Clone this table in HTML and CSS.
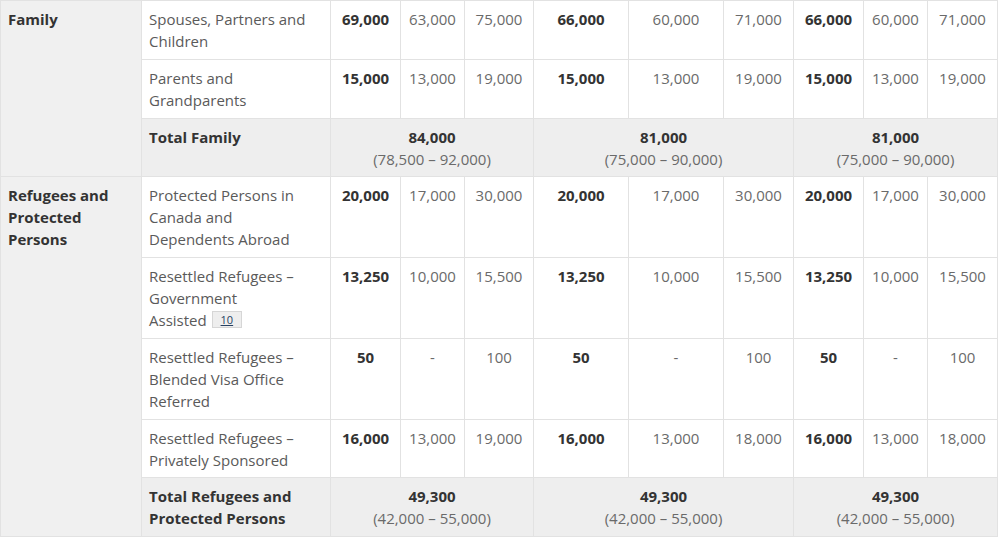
FILE: index.html
```html
<!DOCTYPE html>
<html lang="en">
<head>
<meta charset="utf-8">
<title>Immigration levels</title>
<link rel="stylesheet" href="styles.css">
</head>
<body>
<table class="levels">
  <colgroup>
    <col class="c-cat"><col class="c-sub">
    <col class="c-n1"><col class="c-n2"><col class="c-n3">
    <col class="c-w"><col class="c-w"><col class="c-n1">
    <col class="c-n1"><col class="c-n2"><col class="c-n1">
  </colgroup>
  <tbody>
    <tr>
      <th class="cat" rowspan="3">Family</th>
      <td class="sub">Spouses, Partners and Children</td>
      <td class="num b">69,000</td><td class="num">63,000</td><td class="num">75,000</td>
      <td class="num b">66,000</td><td class="num">60,000</td><td class="num">71,000</td>
      <td class="num b">66,000</td><td class="num">60,000</td><td class="num">71,000</td>
    </tr>
    <tr>
      <td class="sub">Parents and Grandparents</td>
      <td class="num b">15,000</td><td class="num">13,000</td><td class="num">19,000</td>
      <td class="num b">15,000</td><td class="num">13,000</td><td class="num">19,000</td>
      <td class="num b">15,000</td><td class="num">13,000</td><td class="num">19,000</td>
    </tr>
    <tr class="total">
      <td class="sub b">Total Family</td>
      <td class="num" colspan="3"><span class="b">84,000</span><br>(78,500 – 92,000)</td>
      <td class="num" colspan="3"><span class="b">81,000</span><br>(75,000 – 90,000)</td>
      <td class="num" colspan="3"><span class="b">81,000</span><br>(75,000 – 90,000)</td>
    </tr>
    <tr>
      <th class="cat" rowspan="5">Refugees and Protected Persons</th>
      <td class="sub">Protected Persons in Canada and Dependents Abroad</td>
      <td class="num b">20,000</td><td class="num">17,000</td><td class="num">30,000</td>
      <td class="num b">20,000</td><td class="num">17,000</td><td class="num">30,000</td>
      <td class="num b">20,000</td><td class="num">17,000</td><td class="num">30,000</td>
    </tr>
    <tr>
      <td class="sub">Resettled Refugees – Government <span class="keep">Assisted <sup class="fn"><a href="#fn10">10</a></sup></span></td>
      <td class="num b">13,250</td><td class="num">10,000</td><td class="num">15,500</td>
      <td class="num b">13,250</td><td class="num">10,000</td><td class="num">15,500</td>
      <td class="num b">13,250</td><td class="num">10,000</td><td class="num">15,500</td>
    </tr>
    <tr>
      <td class="sub">Resettled Refugees – Blended Visa Office Referred</td>
      <td class="num b">50</td><td class="num">-</td><td class="num">100</td>
      <td class="num b">50</td><td class="num">-</td><td class="num">100</td>
      <td class="num b">50</td><td class="num">-</td><td class="num">100</td>
    </tr>
    <tr>
      <td class="sub">Resettled Refugees – Privately Sponsored</td>
      <td class="num b">16,000</td><td class="num">13,000</td><td class="num">19,000</td>
      <td class="num b">16,000</td><td class="num">13,000</td><td class="num">18,000</td>
      <td class="num b">16,000</td><td class="num">13,000</td><td class="num">18,000</td>
    </tr>
    <tr class="total">
      <td class="sub b">Total Refugees and Protected Persons</td>
      <td class="num" colspan="3"><span class="b">49,300</span><br>(42,000 – 55,000)</td>
      <td class="num" colspan="3"><span class="b">49,300</span><br>(42,000 – 55,000)</td>
      <td class="num" colspan="3"><span class="b">49,300</span><br>(42,000 – 55,000)</td>
    </tr>
  </tbody>
</table>
</body>
</html>
```
FILE: styles.css
```css
html, body {
  margin: 0;
  padding: 0;
  background: #fff;
}
body {
  font-family: "Open Sans", "Noto Sans", sans-serif;
  font-size: 15px;
  line-height: 21.9px;
  color: #5a5a5a;
}
.levels {
  border-collapse: collapse;
  table-layout: fixed;
  width: 998px;
}
.c-cat { width: 141px; }
.c-sub { width: 189px; }
.c-n1 { width: 70px; }
.c-n2 { width: 64px; }
.c-n3 { width: 69px; }
.c-w { width: 95px; }
.levels th,
.levels td {
  border: 1px solid #e2e2e2;
  padding: 8px 7px 6px;
  vertical-align: top;
  text-align: left;
  font-weight: normal;
}
.levels .sub {
  padding-right: 12px;
}
.levels .cat {
  background: #f0f0f0;
  font-weight: 700;
  color: #333;
}
.levels .num {
  text-align: center;
  padding-left: 2px;
  padding-right: 2px;
  color: #6a6a6a;
}
.levels .b {
  font-weight: 700;
  color: #333;
}
.total td {
  background: #eeeeee;
}
.keep {
  white-space: nowrap;
}
.fn {
  display: inline-block;
  vertical-align: 2px;
  font-size: 11px;
  line-height: 15px;
  padding: 0 8px;
  margin-left: 1px;
  background: #eeeeee;
  border: 1px solid #d6d6d6;
}
.fn a {
  color: #284162;
  text-decoration: underline;
}
```
